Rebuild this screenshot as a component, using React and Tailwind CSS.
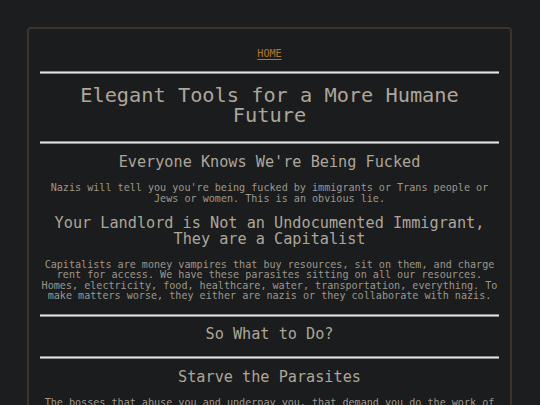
const Rule = ({ className = "" }) => (
  <div className={`h-[3px] border-y border-y-[#8c8c8c] bg-[#e4e4e4] ${className}`} />
);

const sections = [
  {
    title: "Everyone Knows We're Being Fucked",
    body: "Nazis will tell you you're being fucked by immigrants or Trans people or Jews or women. This is an obvious lie.",
  },
  {
    title: "Your Landlord is Not an Undocumented Immigrant, They are a Capitalist",
    body: "Capitalists are money vampires that buy resources, sit on them, and charge rent for access. We have these parasites sitting on all our resources. Homes, electricity, food, healthcare, water, transportation, everything. To make matters worse, they either are nazis or they collaborate with nazis.",
  },
];

export default function App() {
  return (
    <div
      className="min-h-screen w-full bg-[#1b1d1e] pt-[27px] pl-[27px] pr-[28px] pb-8"
      style={{ fontFamily: '"DejaVu Sans Mono", "Liberation Mono", monospace' }}
    >
      <div className="rounded-[4px] border-2 border-[#3a3429] bg-[#1a1c1d] px-[11px] pt-[19px] pb-6 text-center">
        <nav className="leading-[12px] text-[10.1px]">
          <a href="#" className="text-[#b5752f] underline underline-offset-2">
            HOME
          </a>
        </nav>
        <Rule className="mt-[11px]" />
        <h1 className="mt-[11px] text-[20.3px] leading-[20px] text-[#aea69a]">
          Elegant Tools for a More Humane Future
        </h1>
        <Rule className="mt-[16px]" />

        <h2 className="mt-[10px] text-[15.2px] leading-[16px] text-[#aea69a]">
          {sections[0].title}
        </h2>
        <p className="mt-[13px] text-[10.1px] leading-[10.5px] text-[#9f978c]">
          {sections[0].body}
        </p>

        <h2 className="mt-[11px] text-[15.2px] leading-[16px] text-[#aea69a]">
          {sections[1].title}
        </h2>
        <p className="mt-[13px] text-[10.1px] leading-[10.4px] text-[#9f978c]">
          {sections[1].body}
        </p>

        <Rule className="mt-[12px]" />
        <h2 className="mt-[9px] text-[15.2px] leading-[16px] text-[#aea69a]">
          So What to Do?
        </h2>
        <Rule className="mt-[14px]" />

        <h2 className="mt-[10px] text-[15.2px] leading-[16px] text-[#aea69a]">
          Starve the Parasites
        </h2>
        <p className="mt-[13px] text-[10.1px] leading-[10.4px] text-[#9f978c]">
          The bosses that abuse you and underpay you, that demand you do the work of
          three people for the pay of one, they only have power because you keep
          feeding them. Stop feeding them.
        </p>
      </div>
    </div>
  );
}
